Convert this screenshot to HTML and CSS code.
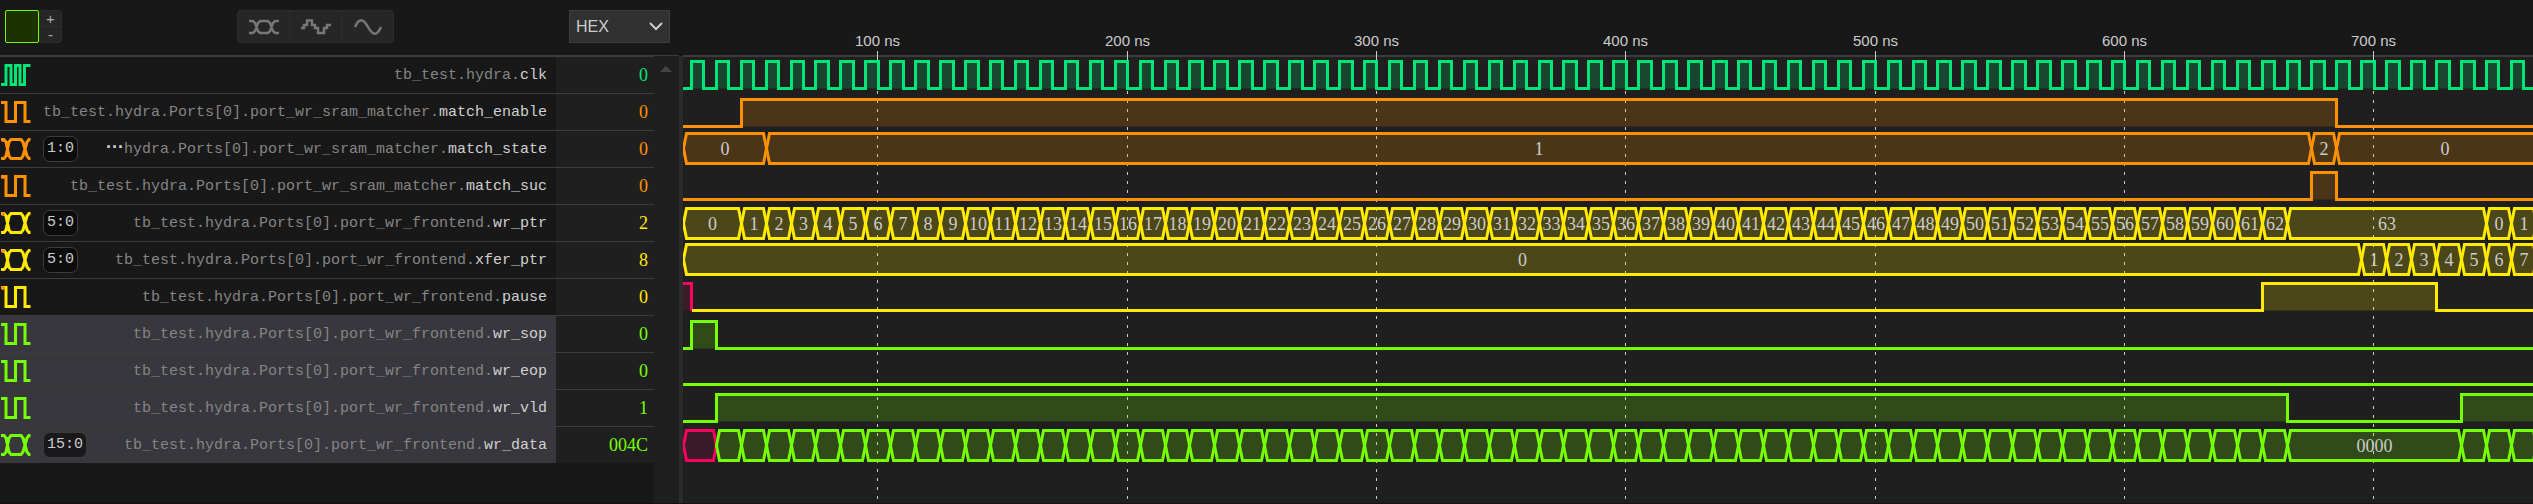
FILE: index.html
```
<!DOCTYPE html>
<html lang="en">
<head>
<meta charset="utf-8">
<title>Waveform viewer</title>
<link rel="stylesheet" href="styles.css">
</head>
<body>
<svg class="defs" aria-hidden="true">
  <symbol id="i-clock" viewBox="0 0 32 24"><path d="M1 21.5H6V2.5H11V21.5H15.500V2.500H20V21.500H24.500V2.500H30.500"/></symbol>
  <symbol id="i-logic" viewBox="0 0 32 24"><path d="M1 2.500H6V21.500H15.500V2.500H25V21.500H30.500"/></symbol>
  <symbol id="i-bus" viewBox="0 0 32 24"><path d="M1 2.500H4L6 5L9 19L11 21.500H21L23 19L27 5L29 2.500H30.500M1 21.500H4L6 19L9 5L11 2.500H21L23 5L27 19L29 21.500H30.500"/></symbol>
</svg>
<div class="viewer">
  <aside class="side">
    <div class="toolbar">
      <div class="color">
        <button class="swatch" aria-label="Signal colour"></button>
        <div class="steps"><button>+</button><button>-</button></div>
      </div>
      <div class="modes">
        <button aria-label="Bus"><svg width="32" height="16" viewBox="0 0 32 16"><path d="M1 2H5L7 4L10 12L12 14H20L22 12L25 4L27 2H31M1 14H5L7 12L10 4L12 2H20L22 4L25 12L27 14H31"/></svg></button>
        <button aria-label="Stepped"><svg width="32" height="16" viewBox="0 0 32 16"><path d="M1 9H4V6H7V1.500H12V6H15V9H18V14H24V9H27V6H31"/></svg></button>
        <button aria-label="Analog"><svg width="32" height="16" viewBox="0 0 32 16"><path d="M3 8C7-1 11-1 16 8S25 17 29 8"/></svg></button>
      </div>
      <label class="radix">
        <select aria-label="Number format"><option>HEX</option><option>BIN</option><option>DEC</option></select>
        <svg width="16" height="10" viewBox="0 0 16 10"><path d="M2 2L8 8L14 2"/></svg>
      </label>
    </div>
    <div class="panel">
      <ul class="signals">
        <li class="green"><div class="name"><svg class="icon"><use href="#i-clock"/></svg><span class="path">tb_test.hydra.<b>clk</b></span></div><output>0</output></li>
        <li class="orange"><div class="name"><svg class="icon"><use href="#i-logic"/></svg><span class="path">tb_test.hydra.Ports[0].port_wr_sram_matcher.<b>match_enable</b></span></div><output>0</output></li>
        <li class="orange"><div class="name"><svg class="icon"><use href="#i-bus"/><circle cx="3" cy="3" r="2"/></svg><span class="bits">1:0</span><span class="path"><b class="dots">···</b>hydra.Ports[0].port_wr_sram_matcher.<b>match_state</b></span></div><output>0</output></li>
        <li class="orange"><div class="name"><svg class="icon"><use href="#i-logic"/><circle cx="3" cy="3" r="2"/></svg><span class="path">tb_test.hydra.Ports[0].port_wr_sram_matcher.<b>match_suc</b></span></div><output>0</output></li>
        <li class="yellow"><div class="name"><svg class="icon"><use href="#i-bus"/><circle cx="3" cy="3" r="2"/></svg><span class="bits">5:0</span><span class="path">tb_test.hydra.Ports[0].port_wr_frontend.<b>wr_ptr</b></span></div><output>2</output></li>
        <li class="yellow"><div class="name"><svg class="icon"><use href="#i-bus"/><circle cx="3" cy="3" r="2"/></svg><span class="bits">5:0</span><span class="path">tb_test.hydra.Ports[0].port_wr_frontend.<b>xfer_ptr</b></span></div><output>8</output></li>
        <li class="yellow"><div class="name"><svg class="icon"><use href="#i-logic"/><circle cx="3" cy="3" r="2"/></svg><span class="path">tb_test.hydra.Ports[0].port_wr_frontend.<b>pause</b></span></div><output>0</output></li>
        <li class="lime selected"><div class="name"><svg class="icon"><use href="#i-logic"/></svg><span class="path">tb_test.hydra.Ports[0].port_wr_frontend.<b>wr_sop</b></span></div><output>0</output></li>
        <li class="lime selected"><div class="name"><svg class="icon"><use href="#i-logic"/></svg><span class="path">tb_test.hydra.Ports[0].port_wr_frontend.<b>wr_eop</b></span></div><output>0</output></li>
        <li class="lime selected"><div class="name"><svg class="icon"><use href="#i-logic"/></svg><span class="path">tb_test.hydra.Ports[0].port_wr_frontend.<b>wr_vld</b></span></div><output>1</output></li>
        <li class="lime selected"><div class="name"><svg class="icon"><use href="#i-bus"/></svg><span class="bits">15:0</span><span class="path">tb_test.hydra.Ports[0].port_wr_frontend.<b>wr_data</b></span></div><output>004C</output></li>
      </ul>
      <div class="scroll"><svg width="12" height="6" viewBox="0 0 12 6"><path d="M0 6L6 0L12 6Z"/></svg></div>
    </div>
  </aside>
  <div class="splitter"></div>
  <main class="waves"><svg id="wave" role="img" aria-label="Signal waveforms"></svg></main>
</div>
<script src="script.js"></script>
</body>
</html>
```
FILE: styles.css
```
* { box-sizing: border-box; }
body {
  margin: 0;
  background: #181818;
  color: #ccc;
  font-family: "Liberation Sans", Arial, sans-serif;
}
button { margin: 0; padding: 0; font: inherit; color: inherit; }
.defs { display: none; }
.viewer {
  display: flex;
  min-height: 100vh;
  border-bottom: 1px solid #1c0c14;
}
.side { width: 679px; flex: none; display: flex; flex-direction: column; }
.toolbar {
  display: flex;
  align-items: flex-start;
  height: 56px;
  padding: 10px 9px 0 5px;
  border-bottom: 1px solid #3c3c3c;
}
.color { display: flex; }
.swatch { width: 34px; height: 33px; background: #1c3300; border: 1px solid #76ff03; border-radius: 2px; }
.steps {
  display: flex;
  flex-direction: column;
  width: 23px;
  height: 33px;
  background: #262626;
  border: 1px solid #2d2d2d;
  border-radius: 0 4px 4px 0;
}
.steps button {
  flex: 1;
  background: none;
  border: 0;
  font-size: 15px;
  line-height: 15px;
  color: #aaa;
}
.steps button + button { border-top: 1px solid #2d2d2d; }
.modes {
  display: flex;
  width: 157px;
  height: 33px;
  margin-left: auto;
  margin-right: 175px;
  background: #262626;
  border: 1px solid #2d2d2d;
  border-radius: 4px;
}
.modes button { flex: 1; display: grid; place-items: center; background: none; border: 0; }
.modes button + button { border-left: 1px solid #2d2d2d; }
.modes path { fill: none; stroke: #777; stroke-width: 2.500; }
.radix { position: relative; width: 101px; height: 33px; }
.radix select {
  appearance: none;
  width: 100%;
  height: 100%;
  padding: 0 6px;
  background: #313131;
  border: 1px solid #3c3c3c;
  border-radius: 0;
  color: #ccc;
  font: 16px "Liberation Sans", Arial, sans-serif;
}
.radix svg { position: absolute; right: 6px; top: 11px; pointer-events: none; }
.radix path { fill: none; stroke: #ccc; stroke-width: 2; }

.panel { flex: 1; display: flex; }
.signals { flex: 1; margin: 0; padding: 0; list-style: none; }
.signals li { display: flex; height: 37px; border-top: 1px solid #3c3c3c; }
.name {
  flex: 1;
  min-width: 0;
  display: flex;
  align-items: center;
  padding-right: 9px;
}
.icon { width: 32px; height: 24px; flex: none; fill: none; stroke: currentColor; stroke-width: 3; }
.icon circle { fill: #ff8c1a; stroke: none; }
.path {
  margin-left: auto;
  padding-top: 2px;
  color: #858585;
  font: 15px/34px "Liberation Mono", monospace;
  white-space: nowrap;
}
.path b { color: #d0d0d0; font-weight: 400; }
.path .dots { font: 700 18px "Liberation Sans", sans-serif; }
.bits {
  margin-left: 11px;
  padding: 0 3px;
  background: #0c0c0c;
  border: 1px solid #3c3c3c;
  border-radius: 7px;
  color: #ccc;
  font: 15px/24px "Liberation Mono", monospace;
}
.signals output {
  width: 98px;
  padding-right: 6px;
  background: #1f1f1f;
  font: 18px/37px "Liberation Serif", serif;
  text-align: right;
}
.selected .name { background: #37373d; }
.selected .bits { background: #19191b; }
.scroll {
  width: 25px;
  padding: 10px 6px;
  background: #1f1f1f;
  line-height: 0;
}
.scroll path { fill: #454545; }
.green { color: #00e676; }
.orange { color: #ff9100; }
.yellow { color: #ffea00; }
.lime { color: #76ff03; }

.splitter { flex: none; width: 4px; margin-top: 56px; background: #2b2b2b; }
.waves { flex: 1; min-width: 0; display: flex; }
.waves svg { flex: 1; width: 100%; min-width: 0; min-height: 464px; }
.ruler-bg { fill: #181818; }
.body-bg { fill: #1f1f1f; }
.ruler-line { fill: #3c3c3c; }
.ruler-text { fill: #ccc; font: 15px "Liberation Sans", Arial, sans-serif; text-anchor: middle; }
.tick { stroke: #ccc; stroke-width: 1; }
.grid { stroke: #ccc; stroke-width: 1; stroke-dasharray: 3 6; }
.fill { fill: currentColor; opacity: 0.2; }
.line { fill: none; stroke: currentColor; stroke-width: 3; shape-rendering: crispEdges; }
.cell { fill: none; stroke: currentColor; stroke-width: 3; }
.value { fill: #ccc; font: 18px "Liberation Serif", serif; text-anchor: middle; }
.unknown { color: #ff0062; }
.unknown.fill { opacity: 0.12; }
```
FILE: script.js
```
const NS = 'http://www.w3.org/2000/svg';
const root = document.getElementById('wave');
const SCALE = 2.4933;
const ORIGIN = -54.5;
const END = 772;
const x = t => Math.max(0, Math.round(ORIGIN + t * SCALE)) + 0.5;

function add(tag, attrs, text) {
  const el = document.createElementNS(NS, tag);
  for (const key in attrs) el.setAttribute(key, attrs[key]);
  if (text !== undefined) el.textContent = text;
  root.appendChild(el);
}

// [start, value] lists; a value lasts until the next start.
const clk = [[0, 0]];
for (let t = 25; t < END; t += 10) clk.push([t, 1], [t + 5, 0]);

const wrPtr = [[0, '0']];
for (let n = 1; n <= 63; n++) wrPtr.push([35 + n * 10, String(n)]);
wrPtr.push([745, '0'], [755, '1']);

const xferPtr = [[0, '0']];
for (let n = 1; n <= 7; n++) xferPtr.push([685 + n * 10, String(n)]);

const wrData = [[0, 'x']];
for (let t = 35; t < 665; t += 10) wrData.push([t, '']);
wrData.push([665, '0000'], [735, ''], [745, ''], [755, '']);

const lanes = [
  { kind: 'logic', color: 'green', top: 61, data: clk },
  { kind: 'logic', color: 'orange', top: 99, data: [[0, 0], [45, 1], [685, 0]] },
  { kind: 'bus', color: 'orange', top: 133, data: [[0, '0'], [55, '1'], [675, '2'], [685, '0']] },
  { kind: 'logic', color: 'orange', top: 172, data: [[0, 0], [675, 1], [685, 0]] },
  { kind: 'bus', color: 'yellow', top: 208, data: wrPtr, end: 765 },
  { kind: 'bus', color: 'yellow', top: 244, data: xferPtr, end: 765 },
  { kind: 'logic', color: 'yellow', top: 283, data: [[0, 'x'], [25, 0], [655, 1], [725, 0]] },
  { kind: 'logic', color: 'lime', top: 321, data: [[0, 0], [25, 1], [35, 0]] },
  { kind: 'logic', color: 'lime', top: 357, data: [[0, 0]], drop: true },
  { kind: 'logic', color: 'lime', top: 394, data: [[0, 0], [35, 1], [665, 0], [735, 1]] },
  { kind: 'bus', color: 'lime', top: 430, data: wrData, end: 765 }
];

function drawLogic(lane) {
  const hi = lane.top + 0.5;
  const lo = hi + 27;
  let d = '';
  lane.data.forEach(([t, v], i) => {
    const a = x(t);
    const next = lane.data[i + 1];
    const b = x(next ? next[0] : END);
    if (v === 'x') {
      add('rect', { class: 'fill unknown', x: a - 1, y: hi, width: b - a + 1, height: 27 });
      add('path', { class: 'line unknown', d: `M-2 ${hi}H${b}V${lo}` });
      d = `M${b} ${lo}`;
      return;
    }
    if (v) add('rect', { class: `fill ${lane.color}`, x: a, y: hi, width: b - a, height: 27 });
    d += i ? `H${a}V${v ? hi : lo}` : `M-2 ${v ? hi : lo}`;
    d += `H${b}`;
  });
  add('path', { class: `line ${lane.color}`, d });
}

function drawBus(lane) {
  const hi = lane.top + 0.5;
  const lo = hi + 30;
  const mid = hi + 15;
  lane.data.forEach(([t, v], i) => {
    const a = x(t);
    const next = lane.data[i + 1];
    const b = x(next ? next[0] : lane.end || END);
    const points = `${a},${mid} ${a + 3},${hi} ${b - 3},${hi} ${b},${mid} ${b - 3},${lo} ${a + 3},${lo}`;
    const color = v === 'x' ? 'unknown' : lane.color;
    add('polygon', { class: `fill ${color}`, points });
    add('polygon', { class: `cell ${color}`, points });
    if (v && v !== 'x') add('text', { class: 'value', x: (a + b) / 2, y: mid + 6 }, v);
  });
}

add('rect', { class: 'body-bg', width: '100%', height: '100%' });
add('rect', { class: 'ruler-bg', width: '100%', height: 55 });
add('rect', { class: 'ruler-line', y: 55, width: '100%', height: 2 });
for (let t = 100; t <= 700; t += 100) {
  const gx = Math.floor(ORIGIN + t * SCALE) + 0.5;
  add('text', { class: 'ruler-text', x: gx, y: 46 }, `${t} ns`);
  add('line', { class: 'tick', x1: gx, x2: gx, y1: 51, y2: 60 });
  add('line', { class: 'grid', x1: gx, x2: gx, y1: 91, y2: 500 });
}
lanes.forEach(lane => (lane.kind === 'bus' ? drawBus : drawLogic)(lane));
```
